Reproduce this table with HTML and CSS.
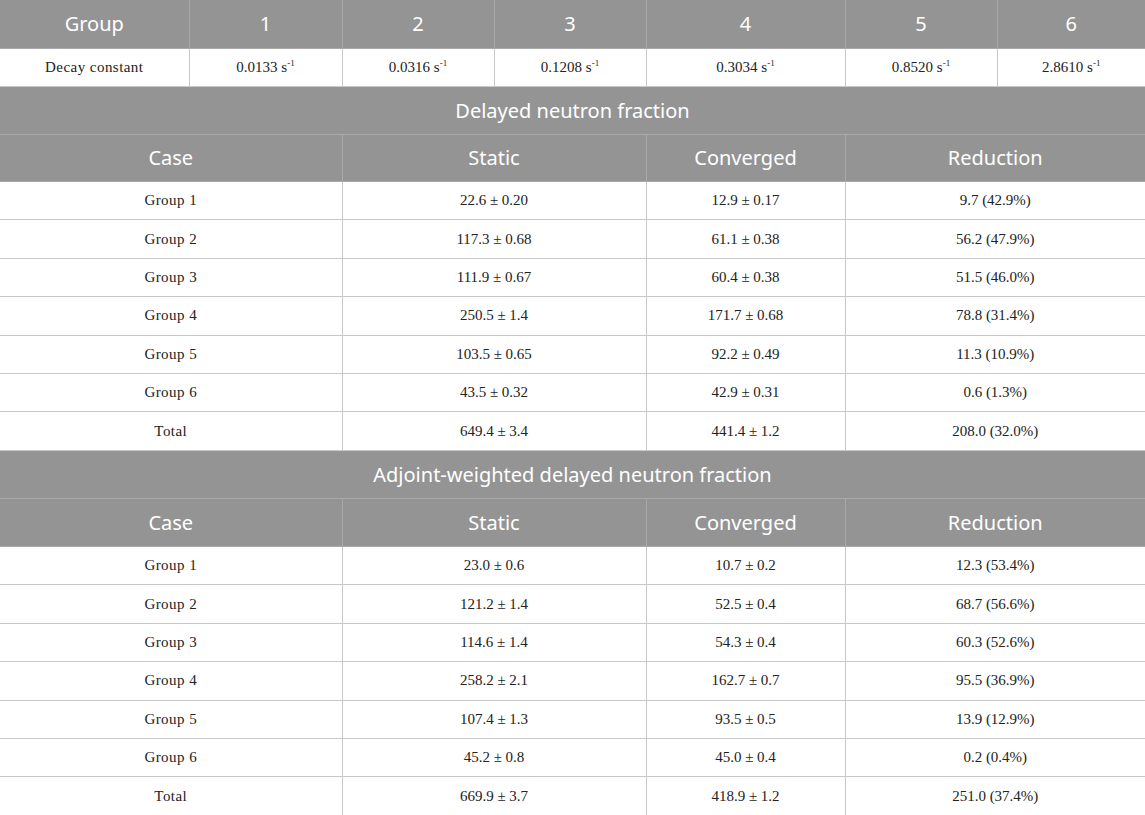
FILE: index.html
```html
<!DOCTYPE html>
<html>
<head>
<meta charset="utf-8">
<link rel="stylesheet" href="styles.css">
</head>
<body>
<table class="data">
  <colgroup>
    <col class="c1"><col class="c2"><col class="c3"><col class="c4"><col class="c5"><col class="c6"><col class="c7">
  </colgroup>
  <tr class="head">
    <th>Group</th><th>1</th><th>2</th><th>3</th><th>4</th><th>5</th><th>6</th>
  </tr>
  <tr class="row">
    <td class="case">Decay constant</td>
    <td>0.0133 s<sup>-1</sup></td>
    <td>0.0316 s<sup>-1</sup></td>
    <td>0.1208 s<sup>-1</sup></td>
    <td>0.3034 s<sup>-1</sup></td>
    <td>0.8520 s<sup>-1</sup></td>
    <td>2.8610 s<sup>-1</sup></td>
  </tr>
  <tr class="head"><th colspan="7">Delayed neutron fraction</th></tr>
  <tr class="head sub"><th colspan="2">Case</th><th colspan="2">Static</th><th>Converged</th><th colspan="2">Reduction</th></tr>
  <tr class="row"><td class="case" colspan="2">Group 1</td><td colspan="2">22.6 ± 0.20</td><td>12.9 ± 0.17</td><td colspan="2">9.7 (42.9%)</td></tr>
  <tr class="row"><td class="case" colspan="2">Group 2</td><td colspan="2">117.3 ± 0.68</td><td>61.1 ± 0.38</td><td colspan="2">56.2 (47.9%)</td></tr>
  <tr class="row"><td class="case" colspan="2">Group 3</td><td colspan="2">111.9 ± 0.67</td><td>60.4 ± 0.38</td><td colspan="2">51.5 (46.0%)</td></tr>
  <tr class="row"><td class="case" colspan="2">Group 4</td><td colspan="2">250.5 ± 1.4</td><td>171.7 ± 0.68</td><td colspan="2">78.8 (31.4%)</td></tr>
  <tr class="row"><td class="case" colspan="2">Group 5</td><td colspan="2">103.5 ± 0.65</td><td>92.2 ± 0.49</td><td colspan="2">11.3 (10.9%)</td></tr>
  <tr class="row"><td class="case" colspan="2">Group 6</td><td colspan="2">43.5 ± 0.32</td><td>42.9 ± 0.31</td><td colspan="2">0.6 (1.3%)</td></tr>
  <tr class="row"><td class="case" colspan="2">Total</td><td colspan="2">649.4 ± 3.4</td><td>441.4 ± 1.2</td><td colspan="2">208.0 (32.0%)</td></tr>
  <tr class="head"><th colspan="7">Adjoint-weighted delayed neutron fraction</th></tr>
  <tr class="head"><th colspan="2">Case</th><th colspan="2">Static</th><th>Converged</th><th colspan="2">Reduction</th></tr>
  <tr class="row"><td class="case" colspan="2">Group 1</td><td colspan="2">23.0 ± 0.6</td><td>10.7 ± 0.2</td><td colspan="2">12.3 (53.4%)</td></tr>
  <tr class="row"><td class="case" colspan="2">Group 2</td><td colspan="2">121.2 ± 1.4</td><td>52.5 ± 0.4</td><td colspan="2">68.7 (56.6%)</td></tr>
  <tr class="row"><td class="case" colspan="2">Group 3</td><td colspan="2">114.6 ± 1.4</td><td>54.3 ± 0.4</td><td colspan="2">60.3 (52.6%)</td></tr>
  <tr class="row"><td class="case" colspan="2">Group 4</td><td colspan="2">258.2 ± 2.1</td><td>162.7 ± 0.7</td><td colspan="2">95.5 (36.9%)</td></tr>
  <tr class="row"><td class="case" colspan="2">Group 5</td><td colspan="2">107.4 ± 1.3</td><td>93.5 ± 0.5</td><td colspan="2">13.9 (12.9%)</td></tr>
  <tr class="row"><td class="case" colspan="2">Group 6</td><td colspan="2">45.2 ± 0.8</td><td>45.0 ± 0.4</td><td colspan="2">0.2 (0.4%)</td></tr>
  <tr class="row"><td class="case" colspan="2">Total</td><td colspan="2">669.9 ± 3.7</td><td>418.9 ± 1.2</td><td colspan="2">251.0 (37.4%)</td></tr>
</table>
</body>
</html>
```

FILE: styles.css
```css
html, body {
  margin: 0;
  padding: 0;
  background: #ffffff;
}

.data {
  width: 1145px;
  border-collapse: collapse;
  table-layout: fixed;
}

.c1 { width: 189px; }
.c2 { width: 153px; }
.c3 { width: 152px; }
.c4 { width: 152px; }
.c5 { width: 199px; }
.c6 { width: 152px; }
.c7 { width: 148px; }

.data th,
.data td {
  border: 1px solid #c8c8c8;
  padding: 0 4px;
  text-align: center;
  vertical-align: middle;
  box-sizing: border-box;
}

.data th {
  background: #949494;
  color: #ffffff;
  font-family: "Noto Sans", "Open Sans", sans-serif;
  font-weight: 400;
  font-size: 20px;
  height: 48px;
  border-color: #a9a9a9;
}

.data tr.sub th {
  height: 47px;
}

.data td {
  font-family: "Liberation Serif", "Times New Roman", serif;
  font-size: 15px;
  color: #222222;
  height: 38.43px;
}

.data td.case {
  letter-spacing: 0.45px;
}

.data tr:first-child th {
  border-top: none;
}

.data th:first-child,
.data td:first-child {
  border-left: none;
}

.data th:last-child,
.data td:last-child {
  border-right: none;
}

.data sup {
  font-size: 9px;
  vertical-align: 6px;
  line-height: 0;
}
```
